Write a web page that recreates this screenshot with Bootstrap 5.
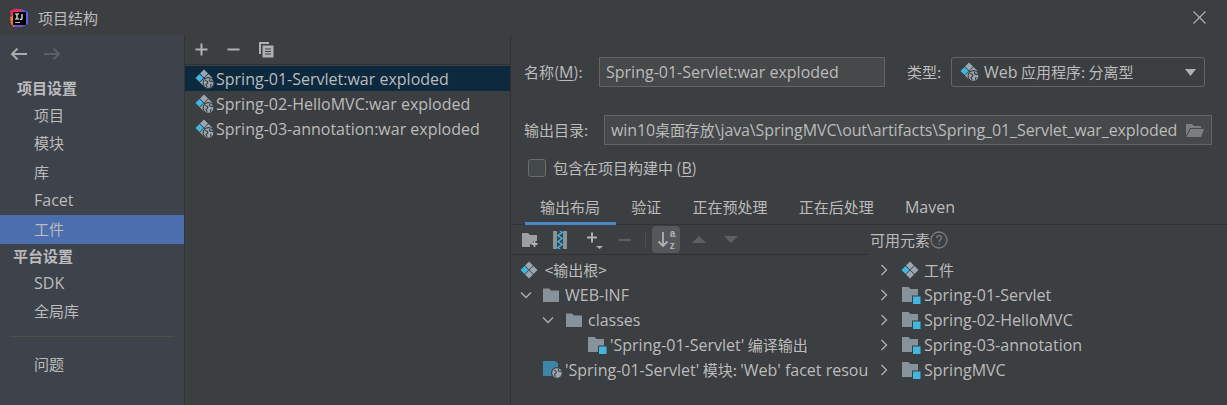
<!DOCTYPE html>
<html lang="zh">
<head>
<meta charset="utf-8">
<title>项目结构</title>
<link href="https://cdn.jsdelivr.net/npm/bootstrap@5.3.0/dist/css/bootstrap.min.css" rel="stylesheet">
<style>
html,body{margin:0;height:405px;overflow:hidden;background:#3c3f41}
body{font-family:"Noto Sans CJK SC",sans-serif;font-size:15px;color:#bbb;line-height:20px}
.la{font-family:"Open Sans",sans-serif;font-size:16px}
.pth{letter-spacing:-.1px}
.shell{width:1227px;height:405px;display:flex;flex-direction:column}
.titlebar{height:35px;flex:none;padding-left:9px;gap:9px}
.titlebar .close-x{margin-left:auto;margin-right:21px}
.body-row{flex:1;display:flex;min-height:0}
.side{width:185px;flex:none;background:#3e434b;border-right:1px solid #323232}
.navarrows{height:37px;padding-left:10px;gap:15px}
.s-h{font-weight:700;padding-left:17px;height:28.5px;line-height:32px}
.s-h2{font-weight:700;padding-left:13px;height:25px;line-height:24px}
.s-i{height:28.5px;line-height:28px;padding-left:34px}
.s-i.on{background:#4b6eaf;height:29px}
.s-sep{height:1px;background:#4f4e4d;margin:10px 10px 13px 10px}
.mid{width:326px;flex:none;border-right:1px solid #323232}
.tb{height:30px;border-bottom:1px solid #323232;padding-left:9px;gap:17px}
.artlist{padding-top:1px}
.artrow{height:25px;padding-left:10px;gap:1px;white-space:nowrap}
.artrow.on{background:#0d293e}
.rt{flex:1;min-width:0}
.form1{height:30px;margin-top:22px;padding-left:13px}
.l1{width:75px}
.fld{height:30px;background:#45494a;border:1px solid #646464;padding-left:6px;line-height:27px;white-space:nowrap;overflow:hidden}
.f-name{width:286px}
.l2{width:44px;margin-left:22px}
.f-sel{width:254px;height:30px;border:1px solid #646464;border-radius:3px;padding:0 8px;gap:4px}
.caret-d{margin-left:auto}
.form2{height:30px;margin-top:28px;padding-left:13px}
.l3{width:80px}
.f-out{width:608px;display:flex;align-items:center;justify-content:space-between}
.folderbtn{margin-right:7px;flex:none}
.cbrow{height:20px;margin-top:13px;padding-left:17px;gap:7px}
.cb{width:18px;height:18px;border:1px solid #6b6b6b;border-radius:3px;background:#43494a}
.ij-tabs{height:35px;margin-top:12px;padding-left:13.5px;border-bottom:1px solid #323232}
.tab1{height:35px;line-height:28px;padding:3px 15.6px 0;white-space:nowrap}
.tab1.on{border-bottom:3px solid #4a88c7}
.lower{display:flex;flex:1;min-height:0}
.lp{width:359px;flex:none;overflow:hidden}
.ltb{height:30px;border-bottom:1px solid #323232;padding-left:10px}
.t-a{margin-left:14px}.t-b{margin-left:19px}.t-c{margin-left:14px}
.tsep{width:1px;height:15px;background:#515151;margin:0 6px 0 13px}
.t-up{margin-left:11px}.t-dn{margin-left:16px}
.tree{padding-top:2px}
.tr1{height:25px;white-space:nowrap}
.tr1 svg{flex:none}
.rp{flex:1;min-width:0}
.rphead{height:30px}
.sortbtn{width:28px;height:27px;background:#55585a;border-radius:4px;display:flex;align-items:center;justify-content:center;gap:1px}
.az{display:flex;flex-direction:column;font-family:"Liberation Sans",sans-serif;font-size:10px;font-weight:700;line-height:11.5px;color:#afb1b3}
.d0{padding-left:9px}.d1{padding-left:9px}.d2{padding-left:31px}.d3{padding-left:76px}.d4{padding-left:32px}
.ic-f{margin:0 5px 0 10px}
.d2 .ic-f{margin-left:11px}
.mr7{margin-right:7px}.mr3{margin-right:3px}.mr2{margin-right:2px}
.r-row{height:25px;padding-left:8px;white-space:nowrap}
.r-c{margin-right:11px}
.r-d{margin:0 5px 0 0}
u{text-underline-offset:2px}
</style>
</head>
<body>
<svg width="0" height="0" class="d-block" aria-hidden="true">
<defs>
<symbol id="dia" viewBox="0 0 18 18">
<path d="M9 .5l4 4-4 4-4-4z" fill="#9aa7b0"/>
<path d="M4.500 5L8.500 9l-4 4-4-4z" fill="#40b6e0"/>
<path d="M13.500 5l4 4-4 4-4-4z" fill="#9aa7b0"/>
<path d="M9 9.500l4 4-4 4-4-4z" fill="#9aa7b0"/>
</symbol>
<symbol id="art" viewBox="0 0 20 20">
<path d="M9 .5l4 4-4 4-4-4z" fill="#9aa7b0"/>
<path d="M4.500 5l4 4-4 4-4-4z" fill="#40b6e0"/>
<path d="M13.500 5l4 4-4 4-4-4z" fill="#9aa7b0"/>
<path d="M9 9.500l4 4-4 4-4-4z" fill="#9aa7b0"/>
<circle cx="13.500" cy="14" r="6" fill="#3c3f41"/>
<circle cx="13.500" cy="14" r="4.800" fill="#9aa7b0"/>
<path d="M10.200 11.500c2 .5 3 1.300 2.400 2.500-.4.800-1.500.6-1.500 1.500 0 .8.800 1.300 1 2.400M15 9.800c-.8 1-.9 1.800.2 2.300 1 .4 2 .3 2.800.6M15.800 18c-.3-1.300-.5-2.200.5-2.900" fill="none" stroke="#3c3f41" stroke-width="1.200"/>
</symbol>
<symbol id="fold" viewBox="0 0 18 16">
<path d="M1 1.500h6l2 2h8v11.500H1z" fill="#9aa7b0" fill-opacity=".8"/>
</symbol>
<symbol id="mod" viewBox="0 0 20 18">
<path d="M1 1h6.500l2 2H17v13H1z" fill="#9aa7b0" fill-opacity=".8"/>
<rect x="11" y="9.500" width="9" height="8.500" fill="#3c3f41"/>
<rect x="12" y="10.500" width="7.500" height="7.500" fill="#40b6e0"/>
</symbol>
<symbol id="chevr" viewBox="0 0 12 12"><path d="M3.500 1L8.500 6l-5 5" fill="none" stroke="#afb1b3" stroke-width="1.300"/></symbol>
<symbol id="chevd" viewBox="0 0 12 12"><path d="M1 3.500L6 8.500l5-5" fill="none" stroke="#afb1b3" stroke-width="1.300"/></symbol>
</defs>
</svg>
<div class="shell">
  <div class="titlebar d-flex align-items-center">
    <svg width="20" height="20" viewBox="0 0 20 20">
      <path d="M4 1h8l7 3v12l-6 3H4z" fill="#5a62e8"/>
      <path d="M1 3l6-2.500L13 2l-3 8-7 3z" fill="#f02860"/>
      <path d="M1 9l5-2 1 9-2 3-3-3z" fill="#f8782c"/>
      <path d="M3 14l3 5 5-1-4-5z" fill="#a03ac8"/>
      <rect x="4" y="4" width="13" height="13" fill="#000"/>
      <path d="M6 6h4M8 6v5M6 11h4M13 6v4.500c0 1-1.500 1-2 .5" fill="none" stroke="#fff" stroke-width="1.200"/>
      <rect x="6" y="14" width="5" height="1" fill="#bbb"/>
    </svg>
    <span>项目结构</span>
    <svg class="close-x" width="13" height="13" viewBox="0 0 13 13"><path d="M.5.500l12 12M12.500.500l-12 12" stroke="#afb1b3" stroke-width="1.100" fill="none"/></svg>
  </div>
  <div class="body-row">
    <div class="side">
      <div class="navarrows d-flex align-items-center">
        <svg width="18" height="14" viewBox="0 0 18 14"><path d="M17 7H2M7.500 1.500L2 7l5.500 5.500" fill="none" stroke="#a9abad" stroke-width="2"/></svg>
        <svg width="18" height="14" viewBox="0 0 18 14"><path d="M1 7h15M10.500 1.500L16 7l-5.500 5.500" fill="none" stroke="#5d5f60" stroke-width="2"/></svg>
      </div>
      <div class="s-h">项目设置</div>
      <div class="s-i">项目</div>
      <div class="s-i">模块</div>
      <div class="s-i">库</div>
      <div class="s-i"><span class="la">Facet</span></div>
      <div class="s-i on">工件</div>
      <div class="s-h2">平台设置</div>
      <div class="s-i"><span class="la">SDK</span></div>
      <div class="s-i">全局库</div>
      <div class="s-sep"></div>
      <div class="s-i">问题</div>
    </div>
    <div class="mid">
      <div class="tb d-flex align-items-center">
        <svg width="15" height="15" viewBox="0 0 15 15"><path d="M7.500 1.500v12M1.500 7.500h12" stroke="#afb1b3" stroke-width="2"/></svg>
        <svg width="15" height="15" viewBox="0 0 15 15"><path d="M1.500 7.500h12" stroke="#afb1b3" stroke-width="2"/></svg>
        <svg width="16" height="17" viewBox="0 0 16 17"><path d="M1 1h10v2H3v10H1z" fill="#afb1b3"/><path d="M4.500 4.500h11v12h-11z" fill="#afb1b3"/><path d="M7 8h6M7 10.500h6M7 13h6" stroke="#3c3f41" stroke-width="1"/></svg>
      </div>
      <div class="artlist">
        <div class="artrow on d-flex align-items-center"><svg width="20" height="20"><use href="#art"/></svg><span class="la">Spring-01-Servlet:war exploded</span></div>
        <div class="artrow d-flex align-items-center"><svg width="20" height="20"><use href="#art"/></svg><span class="la">Spring-02-HelloMVC:war exploded</span></div>
        <div class="artrow d-flex align-items-center"><svg width="20" height="20"><use href="#art"/></svg><span class="la">Spring-03-annotation:war exploded</span></div>
      </div>
    </div>
    <div class="rt d-flex flex-column">
      <div class="form1 d-flex align-items-center">
        <span class="l1">名称(<u class="la">M</u>):</span>
        <div class="fld f-name"><span class="la">Spring-01-Servlet:war exploded</span></div>
        <span class="l2">类型:</span>
        <div class="f-sel d-flex align-items-center">
          <svg width="20" height="20"><use href="#art"/></svg><span><span class="la">Web</span> 应用程序: 分离型</span>
          <svg class="caret-d" width="11" height="7" viewBox="0 0 11 7"><path d="M0 0h11L5.500 7z" fill="#afb1b3"/></svg>
        </div>
      </div>
      <div class="form2 d-flex align-items-center">
        <span class="l3">输出目录:</span>
        <div class="fld f-out"><span class="pth"><span class="la">win10</span>桌面存放<span class="la">\java\SpringMVC\out\artifacts\Spring_01_Servlet_war_exploded</span></span>
          <svg class="folderbtn" width="19" height="15" viewBox="0 0 19 15"><path d="M1 1h6l2 2h7v2H5L1 13z" fill="#7a7e80"/><path d="M5.500 6H19l-3 8H1.500z" fill="#7a7e80"/></svg>
        </div>
      </div>
      <div class="cbrow d-flex align-items-center"><span class="cb"></span><span>包含在项目构建中 (<u class="la">B</u>)</span></div>
      <div class="ij-tabs d-flex">
        <div class="tab1 on">输出布局</div>
        <div class="tab1">验证</div>
        <div class="tab1">正在预处理</div>
        <div class="tab1">正在后处理</div>
        <div class="tab1"><span class="la">Maven</span></div>
      </div>
      <div class="lower">
        <div class="lp">
          <div class="ltb d-flex align-items-center">
            <svg width="18" height="16" viewBox="0 0 18 16"><path d="M1 1h6l2 2h7v6h-4v3H9v3H1z" fill="#9da0a2"/><path d="M13.500 9v6M10.500 12h6" stroke="#afb1b3" stroke-width="1.800"/></svg>
            <svg class="t-a" width="14" height="18" viewBox="0 0 14 18"><rect x="0" y="0" width="14" height="18" fill="#8a9296"/><rect x="4" y="0" width="6" height="18" fill="#35474f"/><path d="M7 0l2 1.500-4 3 4 3-4 3 4 3-4 3 2 1.500" fill="none" stroke="#40b6e0" stroke-width="1.500"/></svg>
            <svg class="t-b" width="18" height="18" viewBox="0 0 18 18"><path d="M6 1.500v10M1 6.500h10" stroke="#afb1b3" stroke-width="2"/><path d="M10 15h7l-3.500 3z" fill="#afb1b3"/></svg>
            <svg class="t-c" width="14" height="14" viewBox="0 0 14 14"><path d="M1 7h12" stroke="#5d6061" stroke-width="2"/></svg>
            <span class="tsep"></span>
            <span class="sortbtn"><svg width="12" height="18" viewBox="0 0 12 18"><path d="M6 1v14M1.500 10.500L6 15l4.500-4.500" fill="none" stroke="#afb1b3" stroke-width="1.800"/></svg><span class="az"><span>a</span><span>z</span></span></span>
            <svg class="t-up" width="16" height="9" viewBox="0 0 16 9"><path d="M1 8h14L8 1z" fill="#5d6061"/></svg>
            <svg class="t-dn" width="16" height="9" viewBox="0 0 16 9"><path d="M1 1h14L8 8z" fill="#5d6061"/></svg>
          </div>
          <div class="tree">
            <div class="tr1 d-flex align-items-center d0"><svg class="mr7" width="18" height="18"><use href="#dia"/></svg>&lt;输出根&gt;</div>
            <div class="tr1 d-flex align-items-center d1"><svg width="12" height="12"><use href="#chevd"/></svg><svg class="ic-f" width="18" height="16"><use href="#fold"/></svg><span class="la">WEB-INF</span></div>
            <div class="tr1 d-flex align-items-center d2"><svg width="12" height="12"><use href="#chevd"/></svg><svg class="ic-f" width="18" height="16"><use href="#fold"/></svg><span class="la">classes</span></div>
            <div class="tr1 d-flex align-items-center d3"><svg class="mr3" width="20" height="18"><use href="#mod"/></svg><span><span class="la">'Spring-01-Servlet'</span> 编译输出</span></div>
            <div class="tr1 d-flex align-items-center d4"><svg class="mr2" width="20" height="19" viewBox="0 0 20 19"><path d="M0 1h12l3 2v13H0z" fill="#3d86a5"/><circle cx="14" cy="13" r="6" fill="#3c3f41"/><circle cx="14" cy="13" r="4.800" fill="#9aa7b0"/><path d="M11 10.500c2 .5 2.600 1.500 2 2.500-.4.700-1.400.6-1.400 1.400 0 .8.700 1.200.9 2.300M15.800 9c-.8 1-.8 1.700.2 2.200 1 .4 1.800.3 2.600.6" fill="none" stroke="#3c3f41" stroke-width="1.100"/></svg><span><span class="la">'Spring-01-Servlet'</span> 模块: <span class="la">'Web' facet resou</span></span></div>
          </div>
        </div>
        <div class="rp">
          <div class="rphead d-flex align-items-center">可用元素<svg width="18" height="18" viewBox="0 0 18 18"><circle cx="9" cy="9" r="8" fill="none" stroke="#7a7d7f" stroke-width="1.300"/><path d="M6.500 7c0-3.200 5-3.200 5 0 0 2-2.500 1.800-2.500 4M9 12.200v1.600" fill="none" stroke="#7a7d7f" stroke-width="1.300"/></svg></div>
          <div class="tree">
            <div class="r-row d-flex align-items-center"><svg class="r-c" width="12" height="12"><use href="#chevr"/></svg><svg class="r-d" width="18" height="18"><use href="#dia"/></svg>工件</div>
            <div class="r-row d-flex align-items-center"><svg class="r-c" width="12" height="12"><use href="#chevr"/></svg><svg class="mr3" width="20" height="18"><use href="#mod"/></svg><span class="la">Spring-01-Servlet</span></div>
            <div class="r-row d-flex align-items-center"><svg class="r-c" width="12" height="12"><use href="#chevr"/></svg><svg class="mr3" width="20" height="18"><use href="#mod"/></svg><span class="la">Spring-02-HelloMVC</span></div>
            <div class="r-row d-flex align-items-center"><svg class="r-c" width="12" height="12"><use href="#chevr"/></svg><svg class="mr3" width="20" height="18"><use href="#mod"/></svg><span class="la">Spring-03-annotation</span></div>
            <div class="r-row d-flex align-items-center"><svg class="r-c" width="12" height="12"><use href="#chevr"/></svg><svg class="mr3" width="20" height="18"><use href="#mod"/></svg><span class="la">SpringMVC</span></div>
          </div>
        </div>
      </div>
    </div>
  </div>
</div>
</body>
</html>
